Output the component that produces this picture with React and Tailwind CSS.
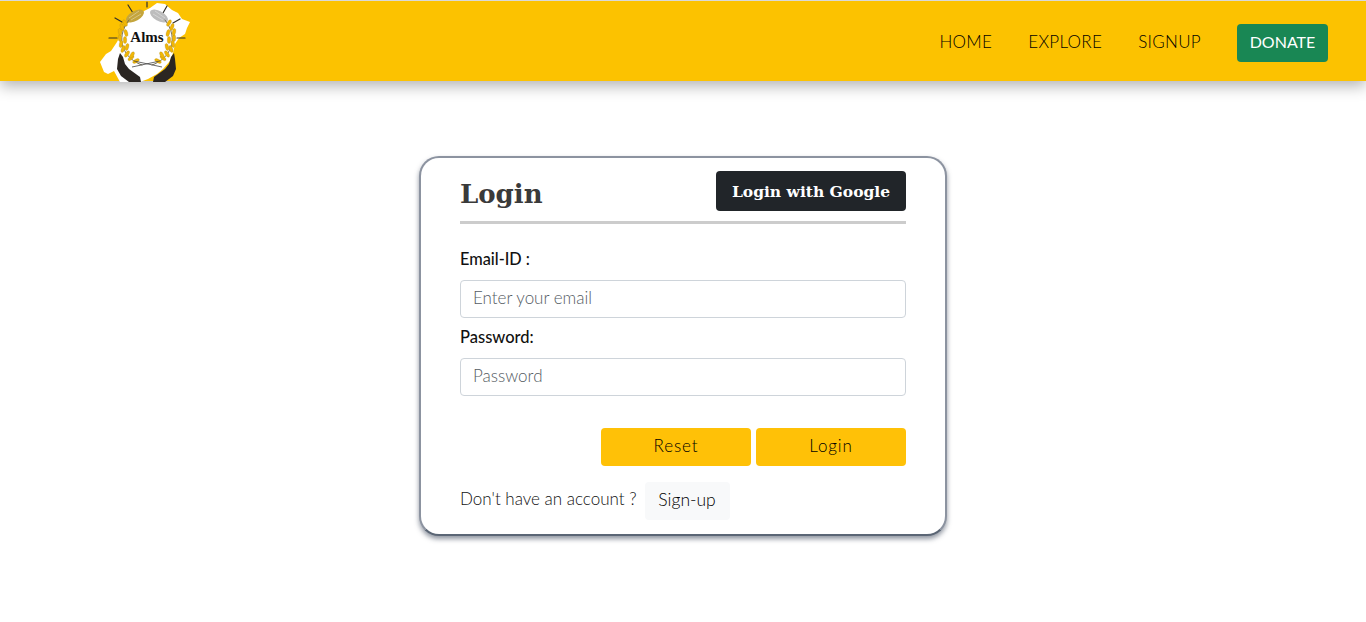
import React from "react";

// leaf positions along the wreath, x, y, angle
const leftLeaves = [
  [36, 60, 62], [31, 57, 50], [27, 53, 35], [23, 48, 20], [21, 43, 10], [20, 37, 0],
  [20, 31, -10], [22, 26, -20], [25, 22, -30],
  [32, 54, 30], [27, 46, 15], [25, 39, 0], [26, 32, -15],
];
const rightLeaves = leftLeaves.map(([x, y, a]) => [94 - x, y, -a]);

const Logo = () => (
  <svg width="92" height="81" viewBox="0 0 92 81" className="block">
    {/* white brush patch */}
    <path
      d="M57 2 L65 3 L72 9 L78 12 L82 18 L90 21 L87 27 L85 33 L79 37 L75 43 L73 52 L70 60 L63 68 L57 73 L48 78 L40 81 L20 81 L14 70 L8 73 L4 71 L0 61 L6 53 L11 50 L17 41 L22 31 L27 23 L33 17 L38 13 L50 7 Z"
      fill="#fff"
    />
    {/* rays */}
    <g stroke="#33302a" strokeWidth="1.2" strokeLinecap="round">
      <line x1="9" y1="37" x2="17" y2="37" />
      <line x1="15" y1="17" x2="22" y2="21" />
      <line x1="28" y1="4" x2="33" y2="12" />
      <line x1="47" y1="1" x2="47" y2="6" />
      <line x1="67" y1="5" x2="63" y2="12" />
      <line x1="80" y1="18" x2="73" y2="22" />
      <line x1="77" y1="37" x2="85" y2="37" />
    </g>
    {/* wheat heads */}
    <ellipse cx="35" cy="15" rx="10" ry="5" transform="rotate(-30 35 15)" fill="#c4a53c" />
    <ellipse cx="59" cy="15" rx="10" ry="5" transform="rotate(30 59 15)" fill="#bdbdbd" />
    <g stroke="#fff" strokeWidth="0.5" opacity="0.7">
      <path d="M29 17 L39 10 M31 19 L41 13" />
      <path d="M55 10 L65 17 M53 13 L63 19" />
    </g>
    {/* wreath */}
    <g fill="none" strokeLinecap="round">
      <path d="M42 64 C24 58 14 38 29 19" stroke="#77705a" strokeWidth="1" />
      <path d="M52 64 C70 58 80 38 65 19" stroke="#77705a" strokeWidth="1" />
    </g>
    {leftLeaves.concat(rightLeaves).map(([x, y, a], i) => (
      <ellipse
        key={i}
        cx={x}
        cy={y}
        rx="1.7"
        ry="3.6"
        transform={`rotate(${a} ${x} ${y})`}
        fill="#f2b705"
        stroke="#a8892a"
        strokeWidth="0.3"
      />
    ))}
    <path d="M32 66 L60 60 M62 66 L34 60" stroke="#444" strokeWidth="0.8" fill="none" />
    <text
      x="47"
      y="41"
      textAnchor="middle"
      fontFamily="'Liberation Serif', serif"
      fontWeight="700"
      fontSize="15"
      fill="#111"
    >
      Alms
    </text>
    {/* hands */}
    <path d="M20 52 L23 56 L25 63 L29 68 L40 76 L41 81 L29 81 L21 75 L17 68 L18 58 Z" fill="#2b2622" />
    <path d="M74 52 L71 56 L69 63 L65 68 L54 76 L53 81 L65 81 L73 75 L76 68 L75 58 Z" fill="#2b2622" />
  </svg>
);

const NavLink = ({ children }) => (
  <a href="#" className="pt-[2px] text-[17px] font-light leading-6 tracking-[0.3px] text-black">
    {children}
  </a>
);

const App = () => {
  return (
    <div className="min-h-[622px] bg-white font-['Lato','Open_Sans',sans-serif] text-[#212529]">
      <nav className="flex h-[81px] items-center justify-between border-t border-[#d9d9d9] bg-[#fcc200] pl-[100px] pr-[38px] shadow-[0_5px_14px_rgba(0,0,0,0.3)]">
        <Logo />
        <div className="flex items-center gap-9">
          <NavLink>HOME</NavLink>
          <NavLink>EXPLORE</NavLink>
          <NavLink>SIGNUP</NavLink>
          <button className="mt-1 h-[38px] w-[91px] rounded bg-[#198754] pb-[2px] text-[16px] text-white">
            DONATE
          </button>
        </div>
      </nav>

      <main className="flex justify-center pt-[75px]">
        <div className="h-[380px] w-[528px] rounded-[20px] border-2 border-[#8c93a0] border-b-[#5b6675] bg-white px-[39px] pt-[13px] shadow-[0_3px_5px_rgba(52,64,84,0.55)]">
          <div className="flex h-[53px] items-start justify-between border-b-[3px] border-[#cccccc]">
            <h2 className="mt-[5px] font-['DejaVu_Serif',serif] text-[26px] font-bold leading-9 text-[#3a3a3a]">
              Login
            </h2>
            <button className="h-[40px] w-[190px] rounded bg-[#212529] pt-[2px] font-['DejaVu_Serif',serif] text-[15.5px] font-bold text-white">
              Login with Google
            </button>
          </div>

          <label className="mt-[23px] block text-[16.3px] font-medium leading-6 text-[#111]">
            Email-ID :
          </label>
          <input
            className="mt-[9px] block h-[38px] w-full rounded border border-[#ced4da] px-3 pb-1 text-[17px] font-light placeholder:text-[#555c63]"
            placeholder="Enter your email"
          />
          <label className="mt-[7px] block text-[16.5px] font-medium leading-6 text-[#111]">
            Password:
          </label>
          <input
            className="mt-[9px] block h-[38px] w-full rounded border border-[#ced4da] px-3 pb-1 text-[17px] font-light placeholder:text-[#555c63]"
            placeholder="Password"
          />

          <div className="mt-8 flex justify-end gap-[5px]">
            <button className="h-[38px] w-[150px] rounded bg-[#ffc107] pb-[2px] text-[17px] font-light tracking-[0.9px] text-black">
              Reset
            </button>
            <button className="h-[38px] w-[150px] rounded bg-[#ffc107] pb-[2px] text-[17px] font-light tracking-[0.9px] text-black">
              Login
            </button>
          </div>

          <div className="mt-4 flex items-center gap-[8px]">
            <span className="pb-1 text-[17px] font-light text-[#111]">Don't have an account ?</span>
            <button className="h-[38px] w-[85px] rounded bg-[#f8f9fa] pb-[1px] text-[17.5px] font-light text-black">
              Sign-up
            </button>
          </div>
        </div>
      </main>
    </div>
  );
};

export default App;
